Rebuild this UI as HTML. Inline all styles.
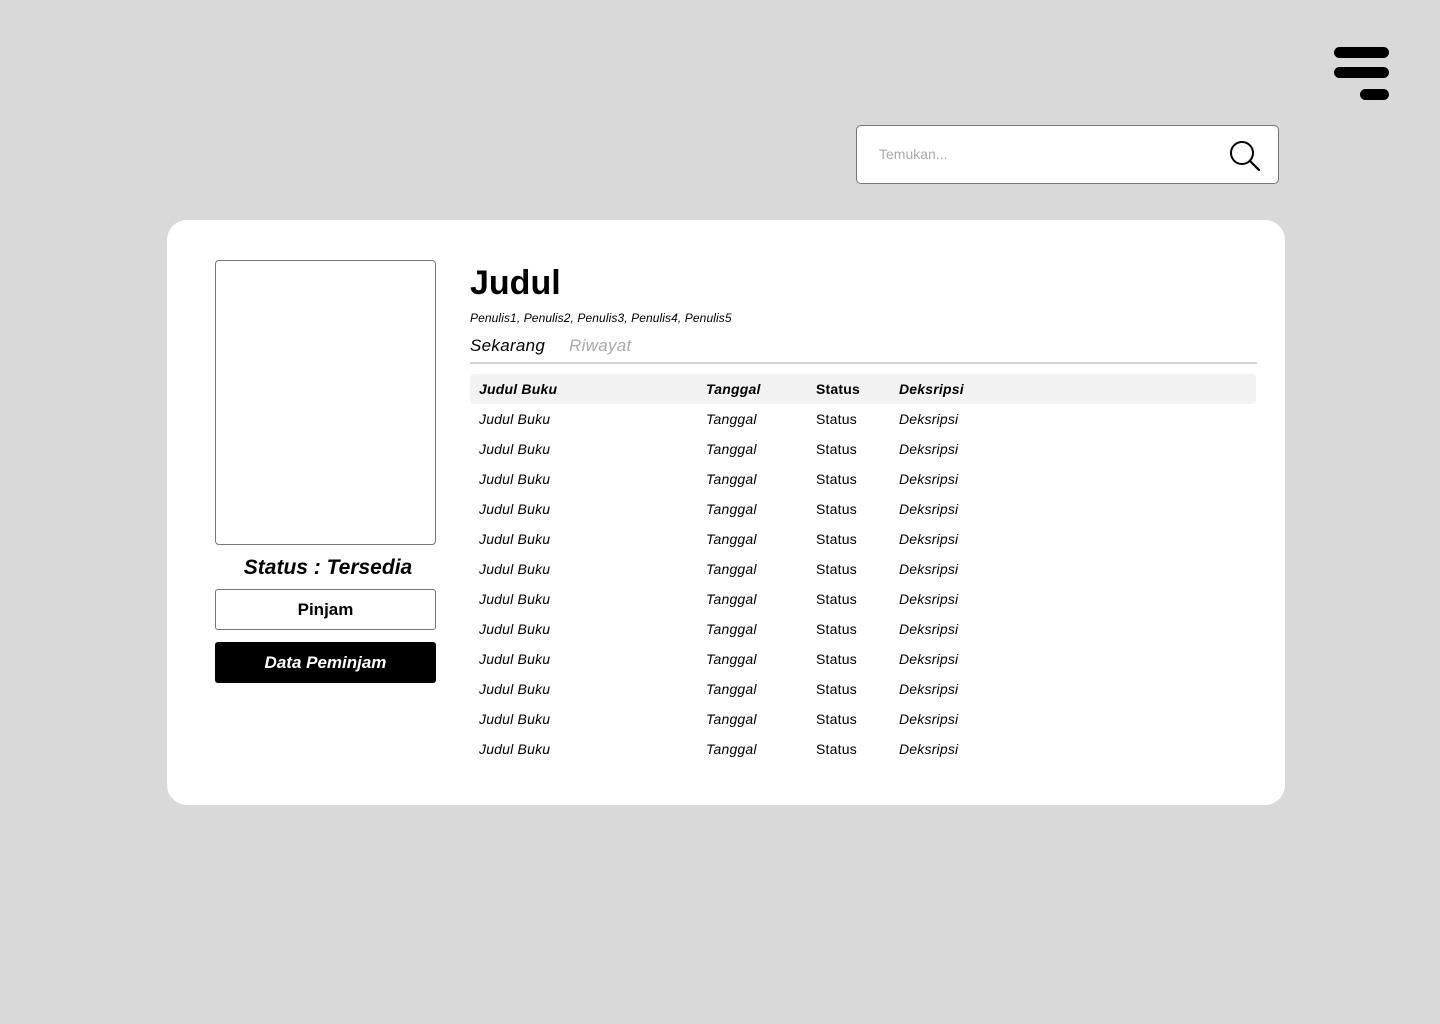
<!DOCTYPE html>
<html><head><meta charset="utf-8"><style>
*{margin:0;padding:0;box-sizing:border-box}
body{width:1440px;height:1024px;background:#d9d9d9;font-family:"Liberation Sans",sans-serif;position:relative;overflow:hidden;color:#000}
.abs{position:absolute}
.bar{position:absolute;background:#000;border-radius:6px;height:11px}
.search{left:856px;top:125px;width:423px;height:59px;background:#fff;border:1px solid #777;border-radius:5px}
.card{left:167px;top:220px;width:1118px;height:585px;background:#fff;border-radius:20px}
.cover{left:215px;top:260px;width:221px;height:285px;border:1px solid #777;border-radius:4px}
.btn{left:215px;width:221px;height:41px;border-radius:3px;display:flex;align-items:center;justify-content:center;font-weight:bold;font-size:17px}
.row{position:absolute;left:470px;width:786px;height:30px;font-size:14px;font-style:italic;letter-spacing:0.2px}
.row span{position:absolute;top:7px}
.hd{background:#f2f2f2;border-radius:4px;font-weight:bold}
</style></head><body>
<div class="bar" style="left:1334px;top:47px;width:55px"></div>
<div class="bar" style="left:1334px;top:67px;width:55px"></div>
<div class="bar" style="left:1360px;top:89px;width:29px"></div>

<div class="abs search">
<div class="abs" style="left:22px;top:20px;font-size:14px;color:#aaa">Temukan...</div>
<svg class="abs" style="left:370px;top:12px" width="36" height="36" viewBox="0 0 36 36"><circle cx="15" cy="15" r="11" fill="none" stroke="#000" stroke-width="2"/><line x1="23" y1="23" x2="32" y2="32" stroke="#000" stroke-width="2.2" stroke-linecap="round"/></svg>
</div>

<div class="abs card"></div>
<div class="abs cover"></div>
<div class="abs" style="left:215px;top:556px;width:226px;text-align:center;font-size:21px;font-weight:bold;font-style:italic">Status : Tersedia</div>
<div class="abs btn" style="top:589px;border:1px solid #777;background:#fff">Pinjam</div>
<div class="abs btn" style="top:642px;background:#000;color:#fff;font-style:italic">Data Peminjam</div>

<div class="abs" style="left:470px;top:264px;font-size:34px;font-weight:bold">Judul</div>
<div class="abs" style="left:470px;top:311px;font-size:12px;font-style:italic;letter-spacing:0.1px">Penulis1, Penulis2, Penulis3, Penulis4, Penulis5</div>
<div class="abs" style="left:470px;top:336px;font-size:17px;font-style:italic;letter-spacing:0.3px">Sekarang</div>
<div class="abs" style="left:569px;top:336px;font-size:17px;font-style:italic;color:#aaa;letter-spacing:0.3px">Riwayat</div>
<div class="abs" style="left:470px;top:362px;width:787px;height:2px;background:#d4d4d4"></div>

<div class="row hd" style="top:374px"><span style="left:9px">Judul Buku</span><span style="left:236px">Tanggal</span><span style="left:346px;font-style:normal">Status</span><span style="left:429px">Deksripsi</span></div>
<div id="rows"></div>
<script>
var h='';for(var i=0;i<12;i++){h+='<div class="row" style="top:'+(404+i*30)+'px"><span style="left:9px">Judul Buku</span><span style="left:236px">Tanggal</span><span style="left:346px;font-style:normal">Status</span><span style="left:429px">Deksripsi</span></div>';}
document.getElementById('rows').innerHTML=h;
</script>
</body></html>
